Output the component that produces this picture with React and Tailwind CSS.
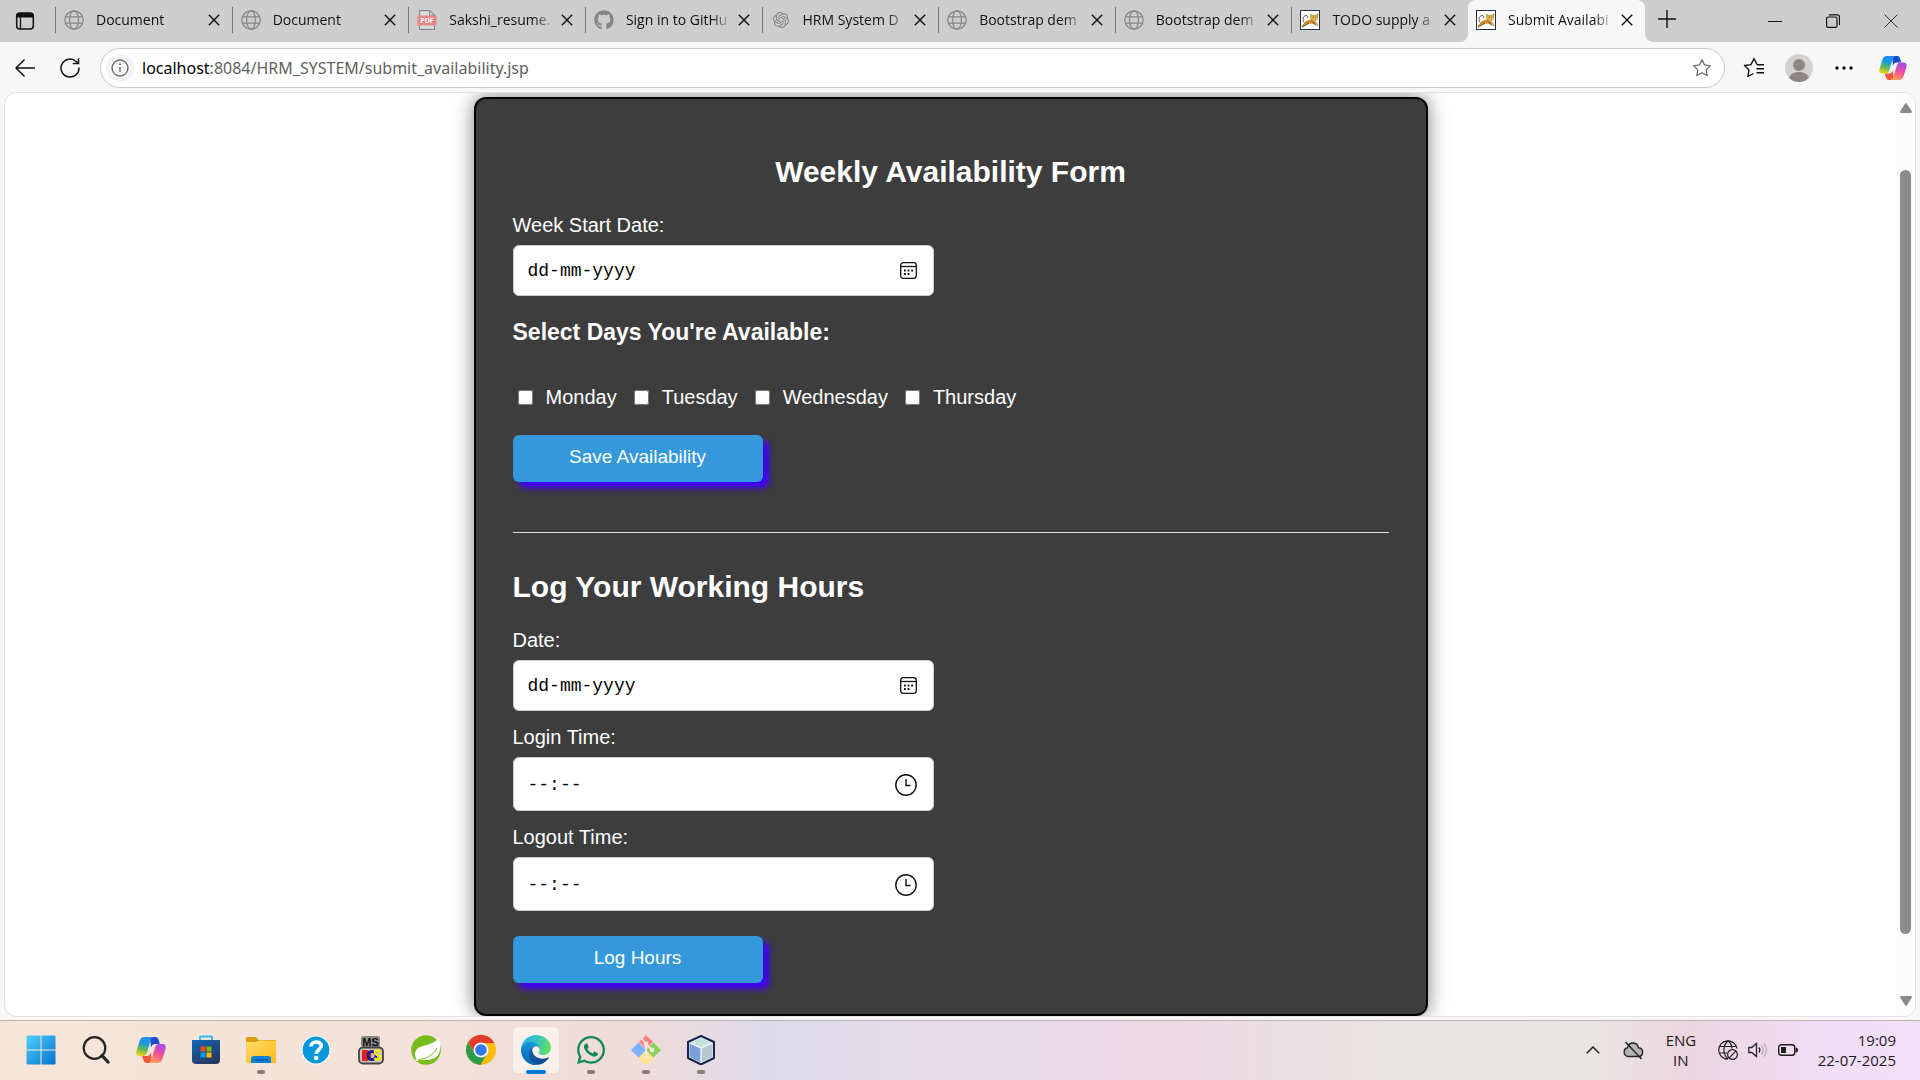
import React from "react";
import { FaGithub, FaWhatsapp } from "react-icons/fa";
import { SiOpenai } from "react-icons/si";

function Globe() {
  return (
    <svg viewBox="0 0 20 20" className="size-5 text-[#858585]" fill="none" stroke="currentColor" strokeWidth="1.2">
      <circle cx="10" cy="10" r="9.2" />
      <ellipse cx="10" cy="10" rx="4.4" ry="9.2" />
      <path d="M1.6 6.8h16.8M1.6 13.2h16.8" />
    </svg>
  );
}

function PdfIcon() {
  return (
    <svg viewBox="0 0 20 20" className="size-5">
      <path d="M2.5.6h10.2l4.800 4.6v14.200h-15z" fill="#dcdcdc" stroke="#8b8b8b" strokeWidth="1.200" />
      <path d="M12.500.6v4.800h5" fill="none" stroke="#8b8b8b" />
      <rect x=".500" y="5.500" width="19" height="10" fill="#ea8585" />
      <text x="10" y="13.200" textAnchor="middle" fontSize="7" fontWeight="700" fill="#fff" fontFamily="Open Sans, sans-serif">PDF</text>
    </svg>
  );
}

function Tomcat() {
  return (
    <svg viewBox="0 0 20 20" className="size-5">
      <rect x=".5" y=".5" width="19" height="19" fill="#fff" stroke="#26303c" />
      <path d="M3.500 14c2.500-3.500 5-4.500 8-4.500l3 1.500 2.500 2 2 3.500-4.500-2.500-3-.500-4 .500-5.500 3.500-.500-1z" fill="#cf8d25" />
      <path d="M10.500 4l1.800 1.200h3.400L18 3.500l-.4 5-2.600 3-3.200-1.500-1.300-2.500z" fill="#e2b244" stroke="#8f7436" strokeWidth=".5" />
      <path d="M4 12.500c-2-3-1-6.500 2-7 1.800 0 2.300 1.500 1 2.500M2 16.800l4-1.800 3-2M12.500 12l3 3.500" fill="none" stroke="#4b4b4b" strokeWidth=".9" />
      <circle cx="13.300" cy="6.900" r=".5" fill="#333" />
      <circle cx="15.900" cy="6.900" r=".5" fill="#333" />
    </svg>
  );
}

function Cross() {
  return (
    <svg viewBox="0 0 12 12" className="size-3" stroke="#111" strokeWidth="1.4" fill="none">
      <path d="M.8.8l10.400 10.400M11.200.8L.8 11.200" />
    </svg>
  );
}

function Copilot({ className, id }) {
  return (
    <svg viewBox="0 0 30 28" className={className}>
      <defs>
        <linearGradient id={id + "a"} x1=".6" y1="0" x2=".3" y2="1">
          <stop offset="0" stopColor="#1b8cf0" />
          <stop offset=".35" stopColor="#199be0" />
          <stop offset=".65" stopColor="#5cb95a" />
          <stop offset="1" stopColor="#f5d313" />
        </linearGradient>
        <linearGradient id={id + "b"} x1=".7" y1="0" x2=".3" y2="1">
          <stop offset="0" stopColor="#a54bf2" />
          <stop offset=".5" stopColor="#ee5097" />
          <stop offset="1" stopColor="#fca65a" />
        </linearGradient>
      </defs>
      <path d="M14 1h5.500c2 0 2.600 1.200 3.200 3.200L23.800 8h-4.600c-2.500 0-3.500 1.500-4.200 3.800z" fill="#1d49cf" />
      <path d="M16 27h-5.500c-2 0-2.600-1.200-3.200-3.200L6.200 20h4.600c2.500 0 3.500-1.500 4.200-3.800z" fill="#f2573c" />
      <path d="M8.500 1h9.300c-2 .3-2.700 2-3.300 4l-3.600 11.500C10 19.200 8.800 20 6.500 20H3.800C.8 20-.3 18 .5 15L3.600 5C4.400 2.300 6 1 8.500 1z" fill={"url(#" + id + "a)"} />
      <path d="M21.500 27h-9.300c2-.3 2.700-2 3.300-4l3.600-11.500C20 8.800 21.200 8 23.500 8h2.700c3 0 4.100 2 3.300 5l-3.100 10c-.8 2.700-2.400 4-4.900 4z" fill={"url(#" + id + "b)"} />
    </svg>
  );
}

const tabs = [
  { title: "Document", icon: <Globe /> },
  { title: "Document", icon: <Globe /> },
  { title: "Sakshi_resume.", icon: <PdfIcon /> },
  { title: "Sign in to GitHu", icon: <FaGithub className="size-5 text-[#858585]" /> },
  { title: "HRM System D", icon: <SiOpenai className="size-4 text-[#858585]" /> },
  { title: "Bootstrap dem", icon: <Globe /> },
  { title: "Bootstrap dem", icon: <Globe /> },
  { title: "TODO supply a", icon: <Tomcat /> },
];

function TabContent({ title, icon }) {
  return (
    <>
      <span className="flex w-5 shrink-0 items-center justify-center">{icon}</span>
      <span className="ml-3 min-w-0 flex-1 overflow-hidden whitespace-nowrap text-left mask-r-from-80% mask-r-to-100%">{title}</span>
      <button aria-label="Close tab" className="mr-2.5 ml-1 flex size-4 shrink-0 items-center justify-center">
        <Cross />
      </button>
    </>
  );
}

function TabStrip() {
  return (
    <header className="flex h-[42px] shrink-0 items-stretch bg-[#cdcdcd] text-sm text-[#111]">
      <button aria-label="Tab actions" className="flex w-[50px] shrink-0 items-center justify-center">
        <svg viewBox="0 0 20 20" className="size-5">
          <rect x="1.700" y="2" width="16.600" height="16" rx="3" fill="none" stroke="#111" strokeWidth="1.500" />
          <path d="M1.700 6.500V5a3 3 0 013-3h10.600a3 3 0 013 3v1.500z" fill="#111" />
          <path d="M5.500 6v12" stroke="#111" strokeWidth="1.300" />
        </svg>
      </button>
      <div className="ml-[5px] flex w-[1413px] min-w-0">
        {tabs.map((tab, i) => (
          <div key={i} className="flex min-w-0 flex-1 items-center pb-0.5">
            <span className="mr-2 h-[26px] w-px shrink-0 bg-[#777]" />
            <TabContent {...tab} />
          </div>
        ))}
      </div>
      <div className="-ml-2 flex bg-[#f7f7f7]">
        <span className="w-2 rounded-br-lg bg-[#cdcdcd]" />
      </div>
      <div className="flex w-[177px] items-center rounded-t-lg bg-[#f7f7f7] pb-0.5 pl-2">
        <TabContent title="Submit Availabi" icon={<Tomcat />} />
      </div>
      <div className="flex bg-[#f7f7f7]">
        <span className="w-2 rounded-bl-lg bg-[#cdcdcd]" />
      </div>
      <button aria-label="New tab" className="mb-1 flex w-7 items-center justify-center">
        <svg viewBox="0 0 18 18" className="size-[18px]" stroke="#111" strokeWidth="1.400">
          <path d="M9 0v18M0 9h18" />
        </svg>
      </button>
      <div className="ml-auto flex">
        <button aria-label="Minimize" className="flex w-[58px] items-center justify-center">
          <svg viewBox="0 0 14 14" className="size-3.5" stroke="#111"><path d="M0 7.500h14" /></svg>
        </button>
        <button aria-label="Restore" className="flex w-[58px] items-center justify-center">
          <svg viewBox="0 0 14 14" className="size-3.5" stroke="#111" fill="none" strokeWidth="1.200">
            <rect x=".6" y="3" width="10.400" height="10.400" rx="1.500" />
            <path d="M3 .8h8.500a2 2 0 012 2V11" />
          </svg>
        </button>
        <button aria-label="Close window" className="flex w-[58px] items-center justify-center">
          <svg viewBox="0 0 14 14" className="size-3.5" stroke="#333"><path d="M.5.500l13 13M13.500.500l-13 13" /></svg>
        </button>
      </div>
    </header>
  );
}

function Toolbar() {
  return (
    <nav className="flex h-[50px] shrink-0 items-center bg-[#f7f7f7] pt-px">
      <button aria-label="Back" className="flex w-[50px] items-center justify-center">
        <svg viewBox="0 0 20 20" className="size-5" fill="none" stroke="#111" strokeWidth="1.500"><path d="M20 10H1M9.500 1.500L1 10l8.500 8.500" /></svg>
      </button>
      <button aria-label="Refresh" className="flex w-10 items-center justify-center">
        <svg viewBox="0 0 20 20" className="size-5" fill="none" stroke="#111" strokeWidth="1.500">
          <path d="M19 9.500A9 9 0 1 1 16.200 3.500L18 5.300" />
          <path d="M18.500.3v5.300h-5.700" />
        </svg>
      </button>
      <div className="ml-2.5 flex h-10 flex-1 items-center rounded-full border border-[#c9c9c9] bg-white pr-3 pl-[5px]">
        <button aria-label="Site information" className="flex size-7 items-center justify-center rounded-full bg-[#f4f4f4]">
          <svg viewBox="0 0 18 18" className="size-[18px]" fill="none" stroke="#666" strokeWidth="1.300">
            <circle cx="9" cy="9" r="8" />
            <path d="M9 8v5" />
            <circle cx="9" cy="5.300" r=".4" fill="#666" />
          </svg>
        </button>
        <div className="flex-1 pl-2 font-['Noto_Sans',sans-serif] text-base text-[#5f5f5f]">
          <span className="text-black">localhost</span>:8084/HRM_SYSTEM/submit_availability.jsp
        </div>
        <button aria-label="Add to favourites" className="flex size-5 items-center justify-center">
          <svg viewBox="0 0 22 22" className="size-[22px]" fill="none" stroke="#666" strokeWidth="1.300" strokeLinejoin="round">
            <path d="M11 1.800l2.800 5.800 6.400.9-4.600 4.500 1.100 6.300L11 16.300l-5.700 3 1.100-6.300L1.800 8.500l6.400-.9z" />
          </svg>
        </button>
      </div>
      <div className="ml-1.5 flex">
        <button aria-label="Favourites" className="flex w-[45px] items-center justify-center">
          <svg viewBox="0 0 22 22" className="size-[22px]" fill="none" stroke="#111" strokeWidth="1.400" strokeLinejoin="round">
            <path d="M14 7.600L11 1.500 8 7.600l-6.500.9L6 13l-1.100 6.500 5.600-3" />
            <path d="M14 7.800h7M13.500 11.800H21M13.500 15.800H21" />
          </svg>
        </button>
        <button aria-label="Profile" className="flex w-[45px] items-center justify-center">
          <svg viewBox="0 0 28 28" className="size-7">
            <circle cx="14" cy="14" r="14" fill="#d5d2ce" />
            <circle cx="14" cy="11" r="6" fill="#8c8784" />
            <path d="M4.200 24c1-4 5-6 9.800-6s8.800 2 9.800 6a14 14 0 01-19.600 0z" fill="#8c8784" />
          </svg>
        </button>
        <button aria-label="Settings and more" className="flex w-[45px] items-center justify-center">
          <svg viewBox="0 0 18 4" className="h-1 w-[18px]" fill="#111"><circle cx="2" cy="2" r="1.700" /><circle cx="9" cy="2" r="1.700" /><circle cx="16" cy="2" r="1.700" /></svg>
        </button>
        <button aria-label="Copilot" className="flex w-[54px] items-center justify-center">
          <Copilot id="bar" className="h-[26px] w-7" />
        </button>
      </div>
    </nav>
  );
}

function CalendarIcon() {
  return (
    <svg viewBox="0 0 17 17" className="mr-1 size-[17px]" fill="none" stroke="#111" strokeWidth="1.300">
      <rect x=".7" y=".7" width="15.600" height="15.600" rx="2.500" />
      <path d="M.7 4.500h15.600" />
      <path d="M4 8.500h1.800M7.600 8.500h1.800M11.200 8.500H13M4 12h1.800M7.600 12h1.800" strokeWidth="1.800" />
    </svg>
  );
}

function ClockIcon() {
  return (
    <svg viewBox="0 0 22 22" className="mr-1 size-[22px]" fill="none" stroke="#111" strokeWidth="1.400">
      <circle cx="11" cy="11" r="10.200" />
      <path d="M11 5v6.500h4.500" />
    </svg>
  );
}

function Field({ id, label, kind }) {
  const isDate = kind === "date";
  return (
    <div>
      <label htmlFor={id} className="block text-xl leading-6">{label}</label>
      <div className={(isDate ? "h-[51px]" : "h-[54px] pt-0.5") + " mt-2 flex max-w-[421px] items-center rounded-md border border-[#ccc] bg-white pr-3 pl-3.5 text-black"}>
        <input
          id={id}
          type="text"
          defaultValue={isDate ? "dd-mm-yyyy" : "--:--"}
          className="min-w-0 flex-1 bg-transparent font-['Liberation_Mono',monospace] text-lg outline-none"
        />
        <button type="button" aria-label={"Open picker for " + label}>{isDate ? <CalendarIcon /> : <ClockIcon />}</button>
      </div>
    </div>
  );
}

function SubmitButton({ children }) {
  return (
    <button type="button" className="block h-[47px] w-[250px] rounded-md bg-[#3498db] pb-0.5 text-[19px] text-white shadow-[6px_6px_6px_#4000ff]">
      {children}
    </button>
  );
}

function AvailabilityPage() {
  return (
    <main className="flex min-h-0 flex-1 bg-[#f7f7f7] px-1 pb-[3px]">
      <div className="flex flex-1 overflow-hidden rounded-xl border border-[#e2e2e2] bg-white">
        <div className="flex-1 px-4 pt-1 font-['Liberation_Sans',Arial,sans-serif]">
          <section className="mx-auto max-w-[954px] rounded-xl border-2 border-black bg-[#3d3d3d] px-[37px] pt-[55px] pb-[31px] text-white shadow-[0_0_20px_rgba(0,0,0,0.5)]">
            <h2 className="text-center text-3xl font-bold">Weekly Availability Form</h2>
            <form className="mt-[23px]">
              <Field id="week" label="Week Start Date:" kind="date" />
              <h3 className="mt-[22px] text-[23px] leading-7 font-bold">Select Days You're Available:</h3>
              <div className="mt-[39px] flex gap-[17px] pl-[5px] text-xl leading-6">
                {["Monday", "Tuesday", "Wednesday", "Thursday"].map((day) => (
                  <label key={day} className="flex items-center gap-[13px]">
                    <input type="checkbox" className="size-[15px] rounded-sm" />
                    {day}
                  </label>
                ))}
              </div>
              <div className="mt-[26px]"><SubmitButton>Save Availability</SubmitButton></div>
            </form>
            <hr className="mt-[50px] border-[#ddd]" />
            <h2 className="mt-9 text-3xl font-bold">Log Your Working Hours</h2>
            <form className="mt-[23px] flex flex-col gap-3.5">
              <Field id="date" label="Date:" kind="date" />
              <Field id="login" label="Login Time:" kind="time" />
              <Field id="logout" label="Logout Time:" kind="time" />
              <div className="mt-[11px]"><SubmitButton>Log Hours</SubmitButton></div>
            </form>
          </section>
        </div>
        <div className="flex w-[19px] flex-col items-center bg-[#fcfcfc] py-2.5">
          <svg viewBox="0 0 12 10" className="h-2.5 w-3" fill="#8b8b8b"><path d="M5 .8q1-1.200 2 0l4.800 7.500Q12 10 11 10H1Q0 10 .2 8.300z" /></svg>
          <div className="mt-[57px] mb-[62px] w-[11px] flex-1 rounded-full bg-[#8b8b8b]" />
          <svg viewBox="0 0 12 10" className="h-2.5 w-3" fill="#8b8b8b"><path d="M5 9.200q1 1.200 2 0l4.800-7.500Q12 0 11 0H1Q0 0 .2 1.700z" /></svg>
        </div>
      </div>
    </main>
  );
}

function WindowsLogo() {
  return (
    <svg viewBox="0 0 30 30" className="size-[30px]">
      <defs><linearGradient id="win" x1="0" y1="0" x2="1" y2="1" ><stop offset="0" stopColor="#4fd0fb" /><stop offset="1" stopColor="#0572d1" /></linearGradient></defs>
      <path d="M1.500.5h13v14H.5v-13a1 1 0 011-1zM15.500.5h13a1 1 0 011 1v13h-14zM.5 15.500h14v14h-13a1 1 0 01-1-1zM15.500 15.500h14v13a1 1 0 01-1 1h-13z" fill="url(#win)" />
    </svg>
  );
}

function SearchIcon() {
  return (
    <svg viewBox="0 0 30 30" className="size-[30px]" fill="none" stroke="#252525">
      <circle cx="13.500" cy="13" r="10.800" strokeWidth="2.200" />
      <path d="M21 20.500l6 6.500" strokeWidth="3.200" strokeLinecap="round" />
    </svg>
  );
}

function StoreIcon() {
  return (
    <svg viewBox="0 0 30 30" className="size-[30px]">
      <defs><linearGradient id="store" x1="0" y1="0" x2=".6" y2="1"><stop offset="0" stopColor="#1266b8" /><stop offset="1" stopColor="#263a61" /></linearGradient></defs>
      <path d="M9 5V2.500a1 1 0 011-1h10a1 1 0 011 1V5" fill="none" stroke="#29bdf0" strokeWidth="2" />
      <path d="M1 5h28v20a4 4 0 01-4 4H5a4 4 0 01-4-4z" fill="url(#store)" />
      <path d="M9.500 11.500h5v5h-5z" fill="#f25022" /><path d="M15.500 11.500h5v5h-5z" fill="#7fba00" />
      <path d="M9.500 17.500h5v5h-5z" fill="#00a4ef" /><path d="M15.500 17.500h5v5h-5z" fill="#ffb900" />
    </svg>
  );
}

function FolderIcon() {
  return (
    <svg viewBox="0 0 30 30" className="size-[30px]">
      <defs><linearGradient id="folder" x1="0" y1="0" x2="1" y2="1"><stop offset="0" stopColor="#ffdc69" /><stop offset="1" stopColor="#fbb917" /></linearGradient></defs>
      <path d="M0 3.500A1.500 1.500 0 011.500 2H10l2.500 3H30v5H0z" fill="#dc9b09" />
      <path d="M0 7h10l3-1.500h17V28H0z" fill="url(#folder)" />
      <path d="M5 28v-4a3 3 0 013-3h14a3 3 0 013 3v4z" fill="#1080d5" />
      <path d="M8 25h14" stroke="#08569e" strokeWidth="1.200" />
    </svg>
  );
}

function HelpIcon() {
  return (
    <svg viewBox="0 0 30 30" className="size-[30px]">
      <circle cx="15" cy="15" r="14" fill="#0798dc" stroke="#fff" strokeWidth="1.200" />
      <path d="M10 11.500c0-6 10.500-6 10.300-.5-.1 3.500-5.100 4-5.100 8" fill="none" stroke="#fff" strokeWidth="3.600" />
      <circle cx="15.200" cy="23" r="2.300" fill="#fff" />
    </svg>
  );
}

function MsDosIcon() {
  return (
    <svg viewBox="0 0 30 30" className="size-[30px]" fontFamily="Liberation Sans, sans-serif" fontWeight="700">
      <rect x="5" y="1" width="19" height="11" rx="2" fill="#8a8a8a" />
      <rect x="3" y="12.500" width="24" height="16" rx="4" fill="#c4c4c4" stroke="#444" strokeWidth="1.800" />
      <text x="14.500" y="10.500" fontSize="11" textAnchor="middle" fill="#111">MS</text>
      <path d="M6 15h4c7 0 7 11 0 11H6z" fill="#e8201c" />
      <circle cx="16" cy="20.500" r="4" fill="none" stroke="#201a87" strokeWidth="3" />
      <path d="M24.500 17c-2-2.500-5.500-2-5.500.5 0 3 5.500 2 5.500 5 0 2.500-4.500 3-6 .5" fill="none" stroke="#f3e518" strokeWidth="2.600" />
    </svg>
  );
}

function SpringIcon() {
  return (
    <svg viewBox="0 0 30 30" className="size-[30px]">
      <circle cx="15" cy="15" r="14.800" fill="#77bc1f" />
      <path d="M28 2c2.500 9 1.500 17-3.500 20.500-5 3.300-12 2.500-17.500 2.200-3-1-4.500-6-1.500-10C9.500 9.500 23 11 28 2z" fill="#fff" />
      <path d="M7 24.500c7-.5 14.500-3 19-11.500" fill="none" stroke="#77bc1f" strokeWidth="1" />
      <circle cx="6" cy="25" r="1.300" fill="#fff" />
    </svg>
  );
}

function ChromeIcon() {
  return (
    <svg viewBox="0 0 30 30" className="size-[30px]">
      <circle cx="15" cy="15" r="15" fill="#fbbc0a" />
      <path d="M15 8h13.300A15 15 0 002 7.500L8.900 18.500z" fill="#e33b2e" />
      <path d="M2 7.500A15 15 0 0014.500 30L21 18.500 15 22 8.900 18.500z" fill="#2c9c4b" />
      <circle cx="15" cy="15" r="7.500" fill="#fff" />
      <circle cx="15" cy="15" r="5.800" fill="#3079ea" />
    </svg>
  );
}

function EdgeIcon() {
  return (
    <svg viewBox="0 0 256 256" className="size-[30px]">
      <defs>
        <linearGradient id="e1" x1="0" y1=".5" x2="1" y2=".5"><stop offset="0" stopColor="#0c59a4" /><stop offset="1" stopColor="#114a8b" /></linearGradient>
        <linearGradient id="e2" x1=".7" y1="0" x2=".3" y2="1"><stop offset="0" stopColor="#1b9de2" /><stop offset="1" stopColor="#0667b5" /></linearGradient>
        <linearGradient id="e3" x1="0" y1=".3" x2="1" y2=".5"><stop offset="0" stopColor="#2fb2e5" /><stop offset=".5" stopColor="#33c3c6" /><stop offset="1" stopColor="#66e15b" /></linearGradient>
      </defs>
      <path fill="url(#e1)" d="M231 190.500c-3.400 1.800-6.900 3.400-10.500 4.700-11.500 4.300-23.600 6.500-35.900 6.500-47.300 0-88.500-32.500-88.500-74.300.1-11.400 6.400-21.900 16.400-27.300-42.800 1.800-53.800 46.400-53.800 72.500 0 73.900 68.100 81.400 82.800 81.400 7.900 0 19.800-2.300 27-4.600l1.300-.4c27.600-9.500 51-28.100 66.600-52.800 1.200-1.900.6-4.300-1.200-5.500-1.300-.8-2.900-.9-4.200-.2z" />
      <path fill="url(#e2)" d="M105.700 241.400c-8.900-5.500-16.600-12.800-22.700-21.300-26.300-36-18.400-86.500 17.600-112.800 3.800-2.700 7.700-5.200 11.900-7.200 3.100-1.500 8.400-4.100 15.500-4 10.100.1 19.600 4.900 25.700 13 4 5.400 6.300 11.900 6.400 18.700 0-.2 24.500-79.600-80-79.600-43.900 0-80 41.700-80 78.200-.2 19.300 4 38.500 12.100 56 27.600 58.800 94.800 87.600 156.400 67.100-21.100 6.600-44.100 3.700-62.900-8.100z" />
      <path fill="url(#e3)" d="M152.300 148.900c-.9 1-3.400 2.500-3.400 5.600 0 2.600 1.700 5.200 4.800 7.300 14.300 10 41.400 8.600 41.500 8.600 10.700 0 21.100-2.900 30.300-8.300 18.800-11 30.400-31.100 30.400-52.900.3-22.400-8-37.300-11.300-43.900C223.500 23.900 177.700 0 128 0 58 0 1 56.200 0 126.200c.5-36.500 36.800-66 80-66 3.500 0 23.500.3 42 10.100 16.300 8.600 24.900 18.900 30.800 29.200 6.200 10.700 7.300 24.100 7.300 29.500s-2.700 13.300-7.800 19.900z" />
    </svg>
  );
}

function GitIcon() {
  return (
    <svg viewBox="0 0 30 30" className="size-[30px]">
      <path d="M15 0l7 7-7 7-7-7z" fill="#ff8080" /><path d="M7.500 7.500l7.500 7.500-7.500 7.500L0 15z" fill="#80b3ff" />
      <path d="M22.500 7.500L30 15l-7.500 7.500L15 15z" fill="#87d35c" /><path d="M15 15.500l7.300 7.300L15 30l-7.300-7.200z" fill="#ffe680" />
      <path d="M11 4l4 5v13M15 9l6 6" stroke="#f7e4dc" strokeWidth="2" fill="none" />
      <circle cx="15" cy="9" r="2.400" fill="#f7e4dc" /><circle cx="15" cy="22" r="2.400" fill="#f7e4dc" /><circle cx="21" cy="15" r="2.400" fill="#f7e4dc" />
    </svg>
  );
}

function CubeIcon() {
  return (
    <svg viewBox="0 0 30 30" className="size-[30px]">
      <path d="M15 1l13 6v16l-13 6.500L2 23V7z" fill="#e8f2f5" stroke="#1d2150" strokeWidth="2" strokeLinejoin="round" />
      <path d="M3.500 8L15 13v14.800L3.500 22z" fill="#7b9fda" /><path d="M26.500 8L15 13v14.800L26.500 22z" fill="#b5c8d2" />
      <path d="M15 2.500L26 7.600 15 12.500 4 7.600z" fill="#c6e2dc" /><path d="M15 13v14.500M4 8l11 5 11-5" stroke="#f4fafc" strokeWidth="1.300" fill="none" />
    </svg>
  );
}

const apps = [
  { name: "Start", icon: <WindowsLogo /> },
  { name: "Search", icon: <SearchIcon /> },
  { name: "Copilot", icon: <Copilot id="task" className="h-7 w-[30px]" /> },
  { name: "Store", icon: <StoreIcon /> },
  { name: "File Explorer", icon: <FolderIcon />, open: true },
  { name: "Help", icon: <HelpIcon /> },
  { name: "MS-DOS", icon: <MsDosIcon /> },
  { name: "Spring", icon: <SpringIcon /> },
  { name: "Chrome", icon: <ChromeIcon /> },
  { name: "Edge", icon: <EdgeIcon />, active: true },
  { name: "WhatsApp", icon: <FaWhatsapp className="size-8 text-[#158a50]" />, open: true },
  { name: "Git", icon: <GitIcon />, open: true },
  { name: "NetBeans", icon: <CubeIcon />, open: true },
];

function Taskbar() {
  return (
    <footer className="flex h-[60px] shrink-0 items-center border-t border-[#b9b3b3] bg-[linear-gradient(90deg,#f6e5d8_0%,#f5e2d8_20%,#f0dbda_33%,#dddbea_40%,#e6dcea_50%,#efd9e5_60%,#e8e4e2_72%,#e8e5e2_83%,#edd5e0_88%,#f0dcf3_94%,#f4e0fb_100%)] pb-0.5 pl-[17px] text-[15px] text-[#1b1b1b]">
      <div className="flex gap-[7px]">
        {apps.map((app) => (
          <button
            key={app.name}
            aria-label={app.name}
            className={(app.active ? "border-[#eaddd8] bg-[#faf1ed] " : "border-transparent ") + "relative flex size-12 items-center justify-center rounded-md border"}
          >
            {app.icon}
            {app.open && <span className="absolute -bottom-px h-1 w-2 rounded-full bg-[#867d7b]" />}
            {app.active && <span className="absolute -bottom-px h-1 w-5 rounded-full bg-[#0078d7]" />}
          </button>
        ))}
      </div>
      <div className="ml-auto flex items-center pr-6">
        <svg viewBox="0 0 14 8" className="h-2 w-3.5" fill="none" stroke="#222" strokeWidth="1.500"><path d="M.8 7.200L7 1l6.200 6.200" /></svg>
        <svg viewBox="0 0 22 20" className="ml-[22px] h-5 w-[22px]" fill="none" stroke="#222" strokeWidth="1.400">
          <path d="M6 16.500a4.500 4.500 0 01-.5-8.800C7 1.500 15 1.500 16.500 7.700c5.500.3 5.500 8.800 0 8.800z" fill="#b5b5b5" />
          <path d="M3.500 2l16 17" />
        </svg>
        <div className="ml-[22px] w-[30px] text-center leading-5">ENG<br />IN</div>
        <svg viewBox="0 0 20 20" className="ml-[22px] size-5" fill="none" stroke="#222" strokeWidth="1.200">
          <path d="M19 8.500A9.200 9.200 0 1010 19.200M2 6.500h16M2 13h7M10 .8c-5.500 5-5.500 13 0 18.400M10 .8c2.500 2 3.800 4.700 4 7.700" />
          <circle cx="14.500" cy="14.500" r="4.900" /><path d="M11.200 17.800l6.600-6.600" />
        </svg>
        <svg viewBox="0 0 20 16" className="ml-2.5 h-4 w-5" fill="none" stroke="#222" strokeWidth="1.300">
          <path d="M.8 5.500h3L8.500 1.500v13L3.800 10.500h-3z" /><path d="M11 5.500q1.800 2.500 0 5" />
          <path d="M13.500 3.500q3.500 4.500 0 9M16 1.500q5 6.500 0 13" stroke="#b9aab4" />
        </svg>
        <svg viewBox="0 0 20 12" className="ml-2.5 h-3 w-5">
          <rect x=".7" y=".7" width="16" height="10.600" rx="2.500" fill="none" stroke="#222" strokeWidth="1.400" />
          <rect x="3" y="3" width="5" height="6" fill="#222" /><path d="M17.500 3.500q2.500 0 2.500 2.500t-2.500 2.500z" fill="#222" />
        </svg>
        <div className="ml-5 text-right leading-5">19:09<br />22-07-2025</div>
      </div>
    </footer>
  );
}

export default function App() {
  return (
    <div className="flex h-screen flex-col overflow-hidden font-['Open_Sans','Segoe_UI',sans-serif]">
      <TabStrip />
      <Toolbar />
      <AvailabilityPage />
      <Taskbar />
    </div>
  );
}
